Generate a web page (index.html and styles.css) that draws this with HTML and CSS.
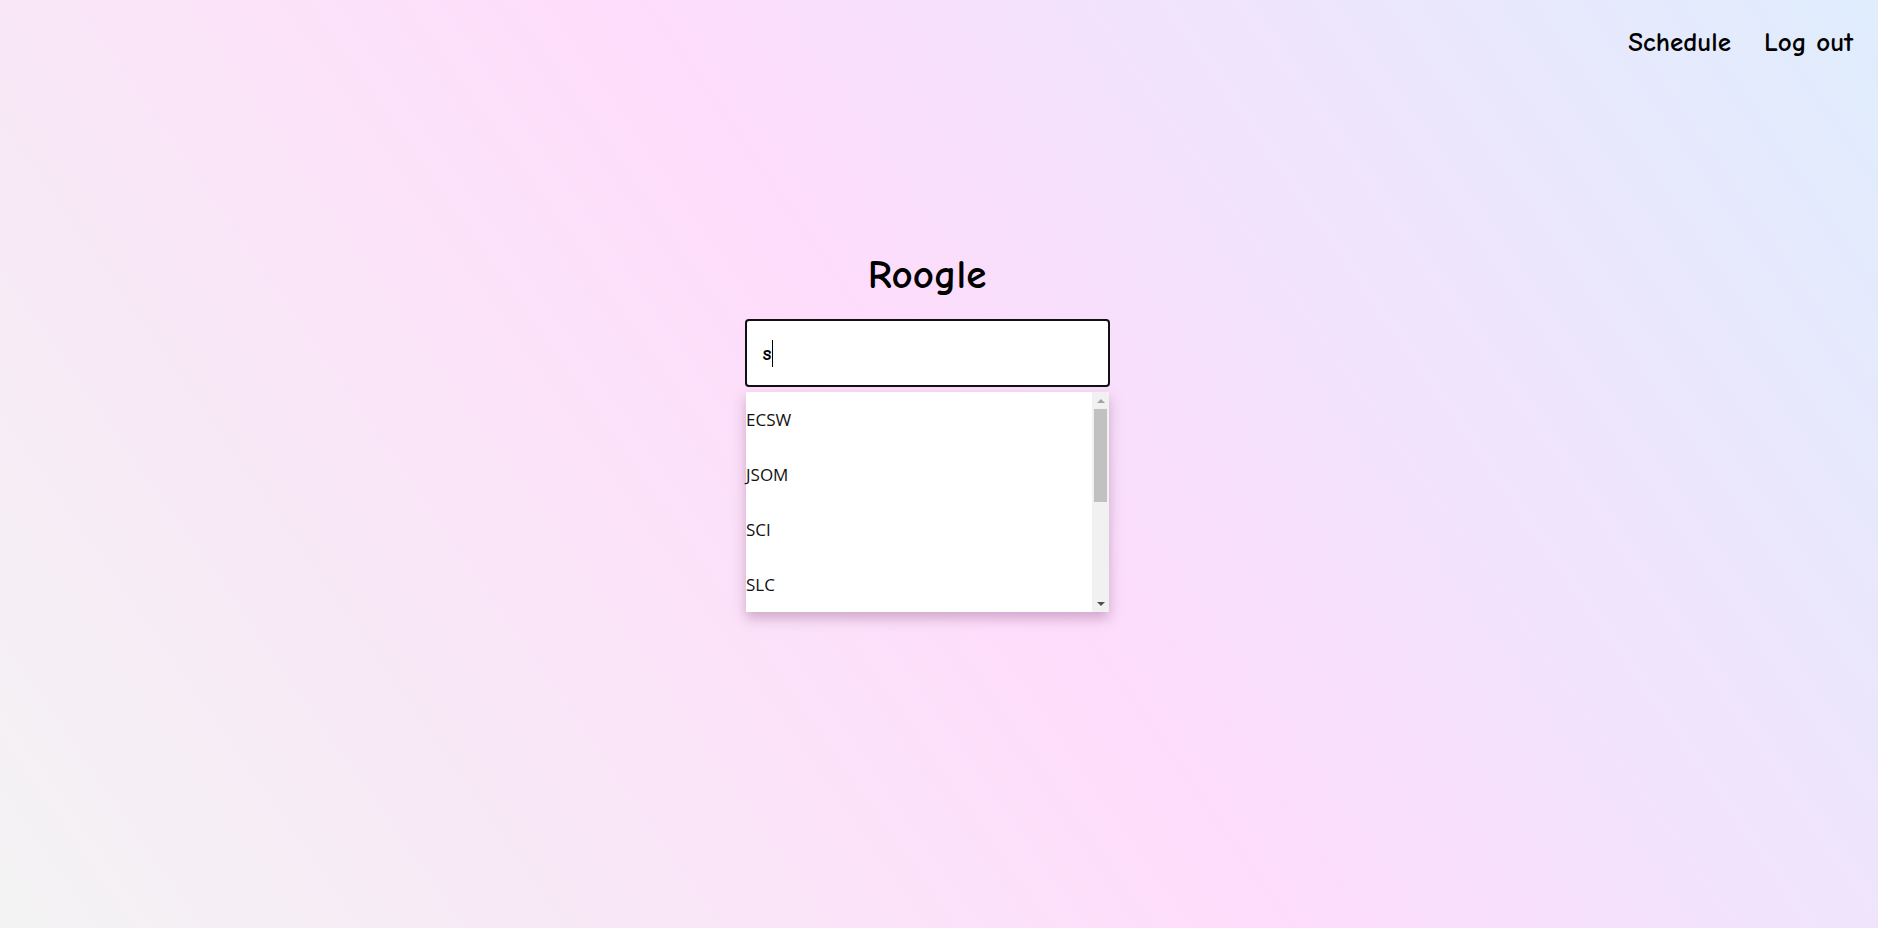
FILE: index.html
```html
<!DOCTYPE html>
<html lang="en">
<head>
  <meta charset="UTF-8" />
  <title>Roogle</title>
  <link rel="stylesheet" href="styles.css">
</head>
<body>
  <nav class="topnav">
    <a class="navlink" href="#">Schedule</a>
    <a class="navlink" href="#">Log out</a>
  </nav>

  <main class="search">
    <h1 class="logo">Roogle</h1>
    <div class="field">
      <span class="typed">s</span><span class="caret"></span>
    </div>

    <div class="suggest">
      <ul class="options">
        <li>ECSW</li>
        <li>JSOM</li>
        <li>SCI</li>
        <li>SLC</li>
      </ul>
      <div class="scrollbar">
        <span class="arrow up"></span>
        <div class="track">
          <div class="thumb"></div>
        </div>
        <span class="arrow down"></span>
      </div>
    </div>
  </main>
</body>
</html>
```

FILE: styles.css
```css
body {
  margin: 0;
  min-height: 100vh;
  background: linear-gradient(55deg, #f3f3f3 0%, #fedcfb 50%, #dfedfd 100%);
  font-family: "Comic Sans MS", "Comic Neue", cursive;
  color: #000;
}

.topnav {
  display: flex;
  justify-content: flex-end;
  gap: 33px;
  padding: 23px 25px 0 0;
}

.navlink {
  color: #000;
  text-decoration: none;
  font-size: 27px;
  font-weight: bold;
  line-height: 40px;
}

.search {
  display: flex;
  flex-direction: column;
  align-items: center;
  padding: 184px 24px 0 0;
}

.logo {
  margin: 0 0 16px;
  font-size: 41px;
  font-weight: bold;
  line-height: 56px;
}

.field {
  box-sizing: border-box;
  width: 365px;
  height: 68px;
  background: #fff;
  border: 2px solid #111;
  border-radius: 4px;
  padding: 0 16px;
  display: flex;
  align-items: center;
  font-size: 21px;
  font-weight: bold;
}

.caret {
  display: inline-block;
  width: 1px;
  height: 27px;
  background: #000;
  margin-left: 1px;
}

.suggest {
  display: flex;
  width: 363px;
  height: 220px;
  margin-top: 5px;
  margin-left: 1px;
  background: #fff;
  box-shadow: 0 6px 12px rgba(120, 60, 110, 0.35);
}

.options {
  flex: 1;
  margin: 0;
  padding: 0;
  list-style: none;
  font-family: "Open Sans", "Noto Sans", sans-serif;
  font-size: 17px;
  color: #111;
}

.options li {
  height: 55px;
  line-height: 55px;
}

.scrollbar {
  width: 17px;
  display: flex;
  flex-direction: column;
  background: #f1f1f1;
}

.arrow {
  height: 17px;
  display: flex;
  align-items: center;
  justify-content: center;
}

.arrow::before {
  content: "";
  border-left: 4px solid transparent;
  border-right: 4px solid transparent;
}

.arrow.up::before {
  border-bottom: 4px solid #a3a3a3;
}

.arrow.down::before {
  border-top: 4px solid #505050;
}

.track {
  flex: 1;
  padding: 0 2px;
}

.thumb {
  height: 93px;
  background: #c1c1c1;
}
```
